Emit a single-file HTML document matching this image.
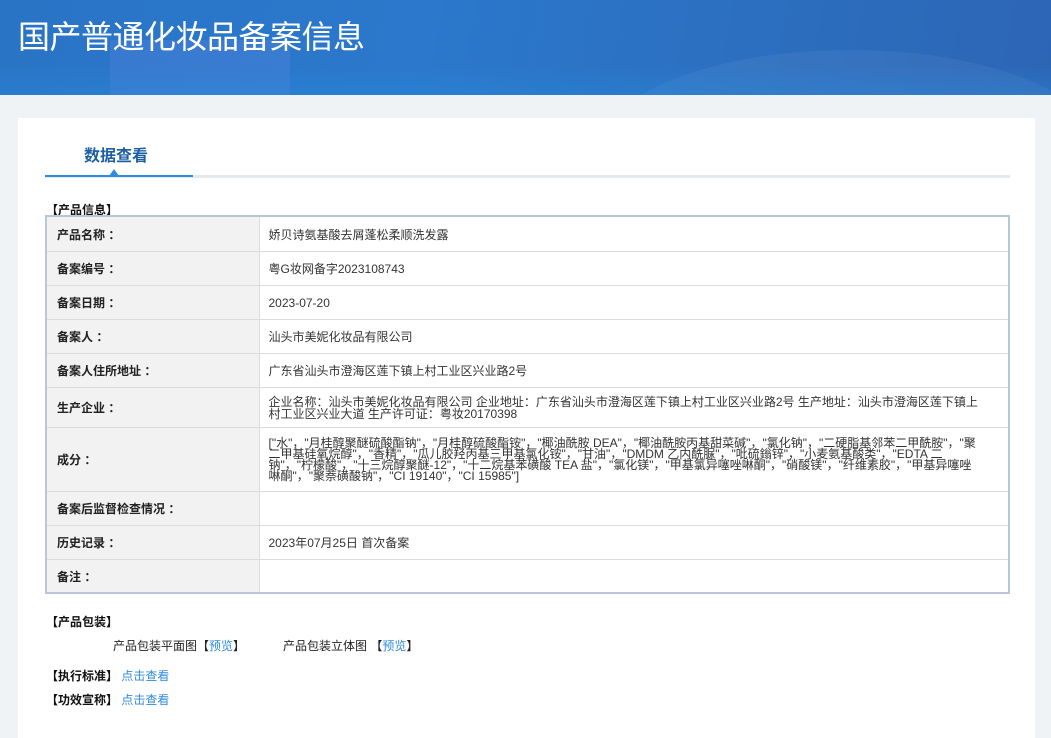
<!DOCTYPE html>
<html><head><meta charset="utf-8"><style>
*{margin:0;padding:0;box-sizing:border-box}
body{width:1051px;height:720px;overflow:hidden;background:#eff3f6;font-family:"Liberation Sans","Noto Sans CJK SC",sans-serif;font-size:12px;color:#333}
.hd{height:95px;background:linear-gradient(100deg,#2a74c6 0%,#2b78cc 40%,#2c6fc0 70%,#2d65b5 100%);position:relative;overflow:hidden}
.hd .t{position:absolute;left:18px;top:12px;font-size:32px;color:#fff;letter-spacing:-0.5px}
.hd .c1{position:absolute;left:110px;top:40px;width:180px;height:80px;background:rgba(100,140,230,.25)}
.hd .c2{position:absolute;left:600px;top:50px;width:500px;height:200px;border-radius:50%;background:rgba(255,255,255,.05)}
.hd .bot{position:absolute;left:0;right:0;bottom:0;height:30px;background:linear-gradient(180deg,rgba(40,140,220,0),rgba(40,140,220,.35))}
.pn{position:absolute;left:18px;top:118px;width:1017px;height:620px;background:#fff}
.tab{position:absolute;left:84px;top:142px;font-size:16px;font-weight:bold;color:#1d5fa6}
.ln{position:absolute;left:45px;top:175px;width:965px;height:3px;background:#e6e9ec}
.ln b{position:absolute;left:0;top:0;width:148px;height:2px;background:#2b8de0}
.tri{position:absolute;left:109px;top:169px;width:0;height:0;border-left:5px solid transparent;border-right:5px solid transparent;border-bottom:7px solid #2b8de0}
.sec{position:absolute;font-weight:bold;color:#111;font-size:12px}
table{position:absolute;left:45px;top:215px;width:965px;border-collapse:collapse;border:2px solid #b9c6d8}
td{border-bottom:1px solid #dcdcdc;font-size:12px;line-height:12px;vertical-align:middle;padding-top:2px}
td.l{width:213px;background:#f2f2f2;font-weight:bold;font-size:12px;padding-left:10px;color:#222;border-right:1px solid #dcdcdc}
td.v{padding-left:9px;padding-right:28px;color:#333}
a{color:#2f8ae0;text-decoration:none}
.r{position:absolute;color:#222}
</style></head><body>
<div class="hd"><div class="c1"></div><div class="c2"></div><div class="bot"></div><div class="t">国产普通化妆品备案信息</div></div>
<div class="pn"></div>
<div class="tab">数据查看</div>
<div class="ln"><b></b></div><div class="tri"></div>
<div class="sec" style="left:46px;top:201px">【产品信息】</div>
<table>
<tr style="height:35px"><td class="l">产品名称 ：</td><td class="v">娇贝诗氨基酸去屑蓬松柔顺洗发露</td></tr>
<tr style="height:34px"><td class="l">备案编号 ：</td><td class="v">粤G妆网备字2023108743</td></tr>
<tr style="height:34px"><td class="l">备案日期 ：</td><td class="v">2023-07-20</td></tr>
<tr style="height:34px"><td class="l">备案人 ：</td><td class="v">汕头市美妮化妆品有限公司</td></tr>
<tr style="height:34px"><td class="l">备案人住所地址 ：</td><td class="v">广东省汕头市澄海区莲下镇上村工业区兴业路2号</td></tr>
<tr style="height:40px"><td class="l">生产企业 ：</td><td class="v">企业名称：汕头市美妮化妆品有限公司 企业地址：广东省汕头市澄海区莲下镇上村工业区兴业路2号 生产地址：汕头市澄海区莲下镇上村工业区兴业大道 生产许可证：粤妆20170398</td></tr>
<tr style="height:64px"><td class="l">成分 ：</td><td class="v" style="line-height:11px">["水"，"月桂醇聚醚硫酸酯钠"，"月桂醇硫酸酯铵"，"椰油酰胺 DEA"，"椰油酰胺丙基甜菜碱"，"氯化钠"，"二硬脂基邻苯二甲酰胺"，"聚二甲基硅氧烷醇"，"香精"，"瓜儿胶羟丙基三甲基氯化铵"，"甘油"，"DMDM 乙内酰脲"，"吡硫鎓锌"，"小麦氨基酸类"，"EDTA 二钠"，"柠檬酸"，"十三烷醇聚醚-12"，"十二烷基苯磺酸 TEA 盐"，"氯化镁"，"甲基氯异噻唑啉酮"，"硝酸镁"，"纤维素胶"，"甲基异噻唑啉酮"，"聚萘磺酸钠"，"CI 19140"，"CI 15985"]</td></tr>
<tr style="height:34px"><td class="l">备案后监督检查情况 ：</td><td class="v"></td></tr>
<tr style="height:34px"><td class="l">历史记录 ：</td><td class="v">2023年07月25日 首次备案</td></tr>
<tr style="height:34px"><td class="l">备注 ：</td><td class="v"></td></tr>
</table>
<div class="sec" style="left:46px;top:613px">【产品包装】</div>
<div class="r" style="left:113px;top:637px">产品包装平面图【<a>预览</a>】</div>
<div class="r" style="left:283px;top:637px">产品包装立体图 【<a>预览</a>】</div>
<div class="sec" style="left:46px;top:667px">【执行标准】 <a style="font-weight:normal">点击查看</a></div>
<div class="sec" style="left:46px;top:691px">【功效宣称】 <a style="font-weight:normal">点击查看</a></div>
</body></html>
